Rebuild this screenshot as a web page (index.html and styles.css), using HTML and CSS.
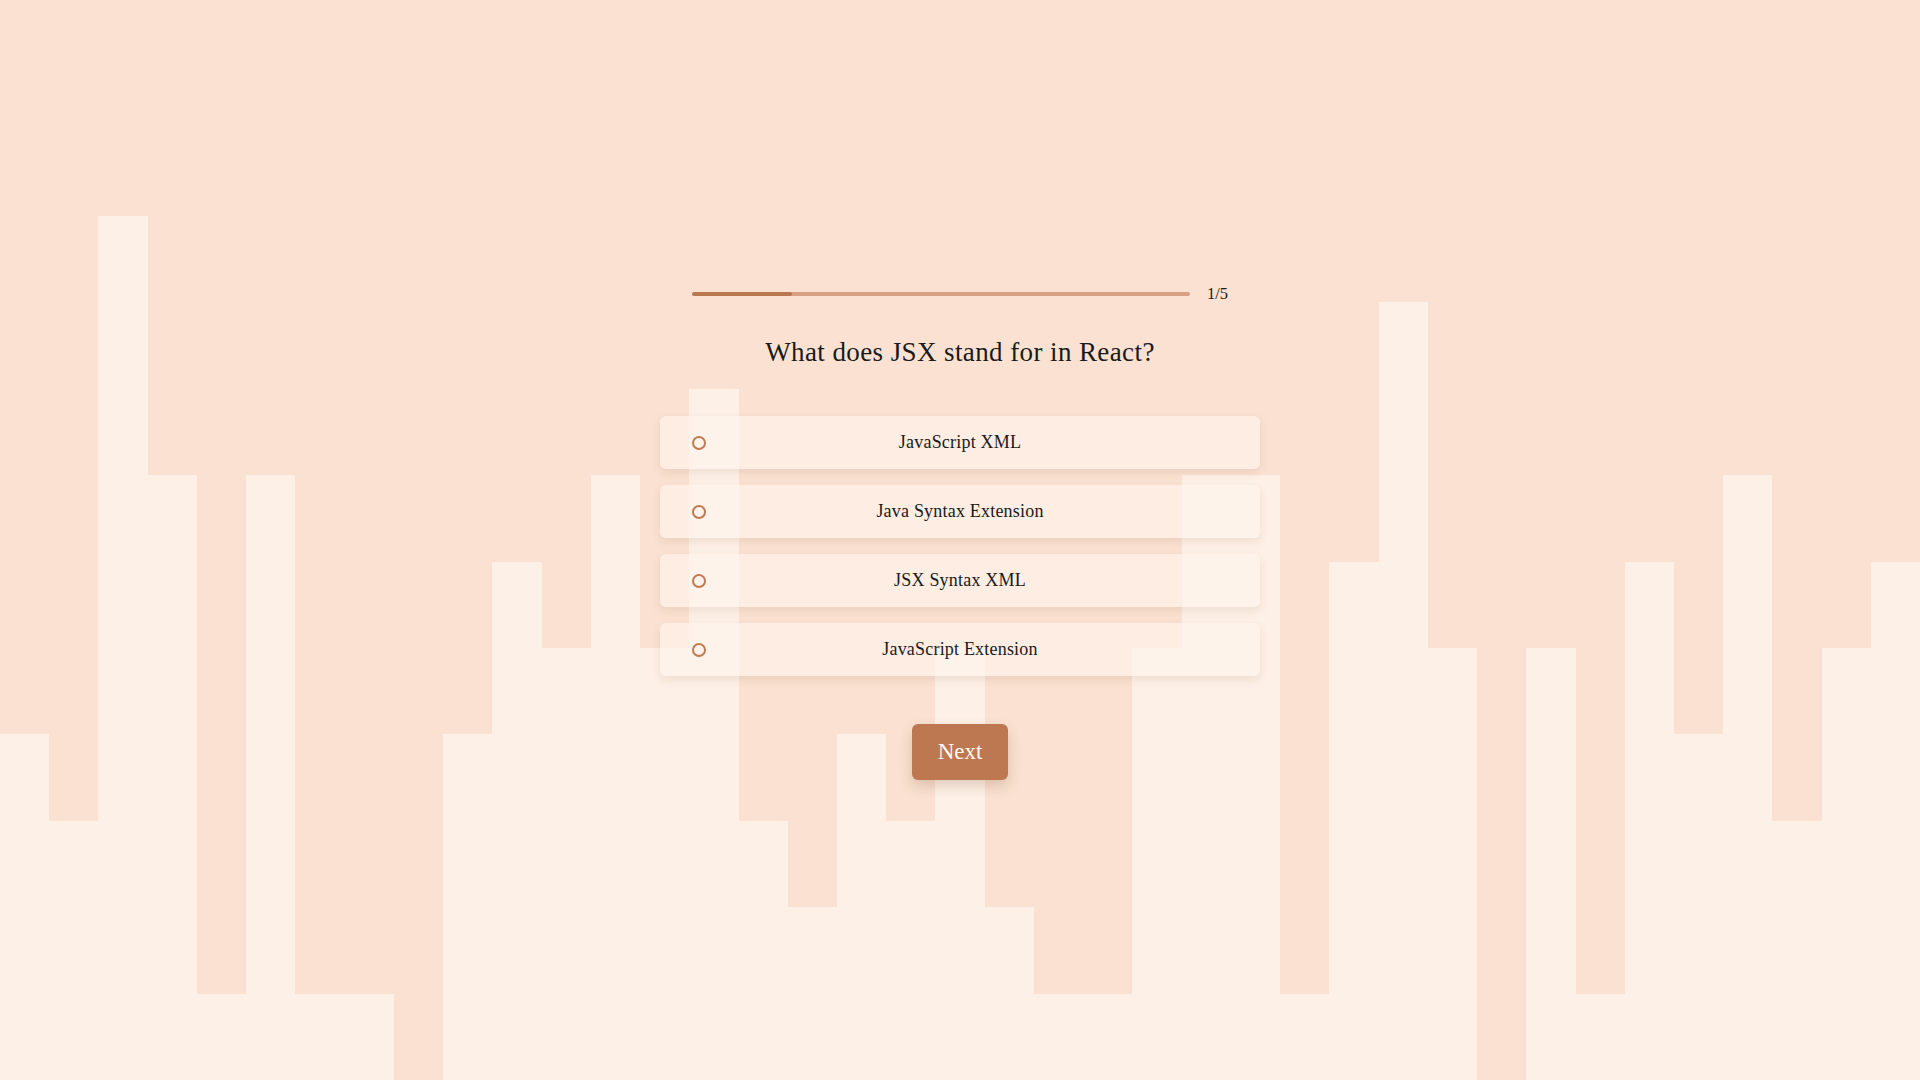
FILE: index.html
```html
<!DOCTYPE html>
<html lang="en">
<head>
<meta charset="utf-8">
<title>Quiz</title>
<link rel="stylesheet" href="styles.css">
</head>
<body>
<div class="page">
  <div class="skyline" aria-hidden="true">
    <div class="bar" style="height:32%"></div>
    <div class="bar" style="height:24%"></div>
    <div class="bar" style="height:80%"></div>
    <div class="bar" style="height:56%"></div>
    <div class="bar" style="height:8%"></div>
    <div class="bar" style="height:56%"></div>
    <div class="bar" style="height:8%"></div>
    <div class="bar" style="height:8%"></div>
    <div class="bar" style="height:0%"></div>
    <div class="bar" style="height:32%"></div>
    <div class="bar" style="height:48%"></div>
    <div class="bar" style="height:40%"></div>
    <div class="bar" style="height:56%"></div>
    <div class="bar" style="height:40%"></div>
    <div class="bar" style="height:64%"></div>
    <div class="bar" style="height:24%"></div>
    <div class="bar" style="height:16%"></div>
    <div class="bar" style="height:32%"></div>
    <div class="bar" style="height:24%"></div>
    <div class="bar" style="height:40%"></div>
    <div class="bar" style="height:16%"></div>
    <div class="bar" style="height:8%"></div>
    <div class="bar" style="height:8%"></div>
    <div class="bar" style="height:40%"></div>
    <div class="bar" style="height:56%"></div>
    <div class="bar" style="height:56%"></div>
    <div class="bar" style="height:8%"></div>
    <div class="bar" style="height:48%"></div>
    <div class="bar" style="height:72%"></div>
    <div class="bar" style="height:40%"></div>
    <div class="bar" style="height:0%"></div>
    <div class="bar" style="height:40%"></div>
    <div class="bar" style="height:8%"></div>
    <div class="bar" style="height:48%"></div>
    <div class="bar" style="height:32%"></div>
    <div class="bar" style="height:56%"></div>
    <div class="bar" style="height:24%"></div>
    <div class="bar" style="height:40%"></div>
    <div class="bar" style="height:48%"></div>
  </div>

  <main class="quiz">
    <div class="progress-row">
      <div class="progress-track"><div class="progress-fill" style="width:20%"></div></div>
      <span class="progress-count">1/5</span>
    </div>

    <h1 class="question">What does JSX stand for in React?</h1>

    <ul class="options">
      <li class="option"><span class="radio"></span><span class="option-text">JavaScript XML</span></li>
      <li class="option"><span class="radio"></span><span class="option-text">Java Syntax Extension</span></li>
      <li class="option"><span class="radio"></span><span class="option-text">JSX Syntax XML</span></li>
      <li class="option"><span class="radio"></span><span class="option-text">JavaScript Extension</span></li>
    </ul>

    <button class="next-btn" type="button">Next</button>
  </main>
</div>
</body>
</html>
```

FILE: styles.css
```css
* {
  box-sizing: border-box;
}

html, body {
  margin: 0;
  padding: 0;
  height: 100%;
  overflow: hidden;
}

body {
  background: #fae1d1;
  font-family: "Liberation Serif", "DejaVu Serif", serif;
  color: #1c1c1c;
}

.page {
  display: grid;
  width: 100vw;
  height: 100vh;
}

.skyline,
.quiz {
  grid-area: 1 / 1;
}

.skyline {
  display: flex;
  align-items: flex-end;
  height: 100%;
}

.bar {
  flex: 1 1 0;
  background: #fdf0e6;
}

.quiz {
  justify-self: center;
  width: 600px;
  padding-top: 284px;
  display: flex;
  flex-direction: column;
  align-items: center;
  position: relative;
}

.progress-row {
  width: 100%;
  padding: 0 32px;
  height: 20px;
  display: flex;
  align-items: center;
  gap: 17px;
}

.progress-track {
  flex: 1;
  height: 4px;
  border-radius: 2px;
  background: #d9a184;
  overflow: hidden;
}

.progress-fill {
  height: 100%;
  border-radius: 2px;
  background: #bc7650;
}

.progress-count {
  font-size: 16.5px;
  line-height: 20px;
  color: #1c1c1c;
}

.question {
  margin: 32px 0 0;
  font-size: 27px;
  line-height: 32px;
  letter-spacing: 0.4px;
  font-weight: normal;
  text-align: center;
  color: #1a1a1a;
}

.options {
  list-style: none;
  margin: 48px 0 0;
  padding: 0;
  width: 100%;
  display: flex;
  flex-direction: column;
  gap: 16px;
}

.option {
  height: 53px;
  display: grid;
  grid-template-columns: 46px 1fr 46px;
  align-items: center;
  padding: 0 32px;
  background: rgba(255, 245, 238, 0.6);
  border-radius: 6px;
  box-shadow: 0 4px 10px rgba(120, 70, 40, 0.1);
}

.radio {
  width: 14px;
  height: 14px;
  border: 2px solid #c07a52;
  border-radius: 50%;
}

.option-text {
  text-align: center;
  font-size: 18px;
  letter-spacing: 0.2px;
  color: #1a1a1a;
}

.next-btn {
  margin-top: 48px;
  width: 96px;
  height: 56px;
  border: none;
  border-radius: 6px;
  background: #bd7852;
  color: #fff8f0;
  font-family: "Liberation Serif", "DejaVu Serif", serif;
  font-size: 23px;
  box-shadow: 0 6px 14px rgba(110, 60, 30, 0.2);
  cursor: pointer;
}
```
